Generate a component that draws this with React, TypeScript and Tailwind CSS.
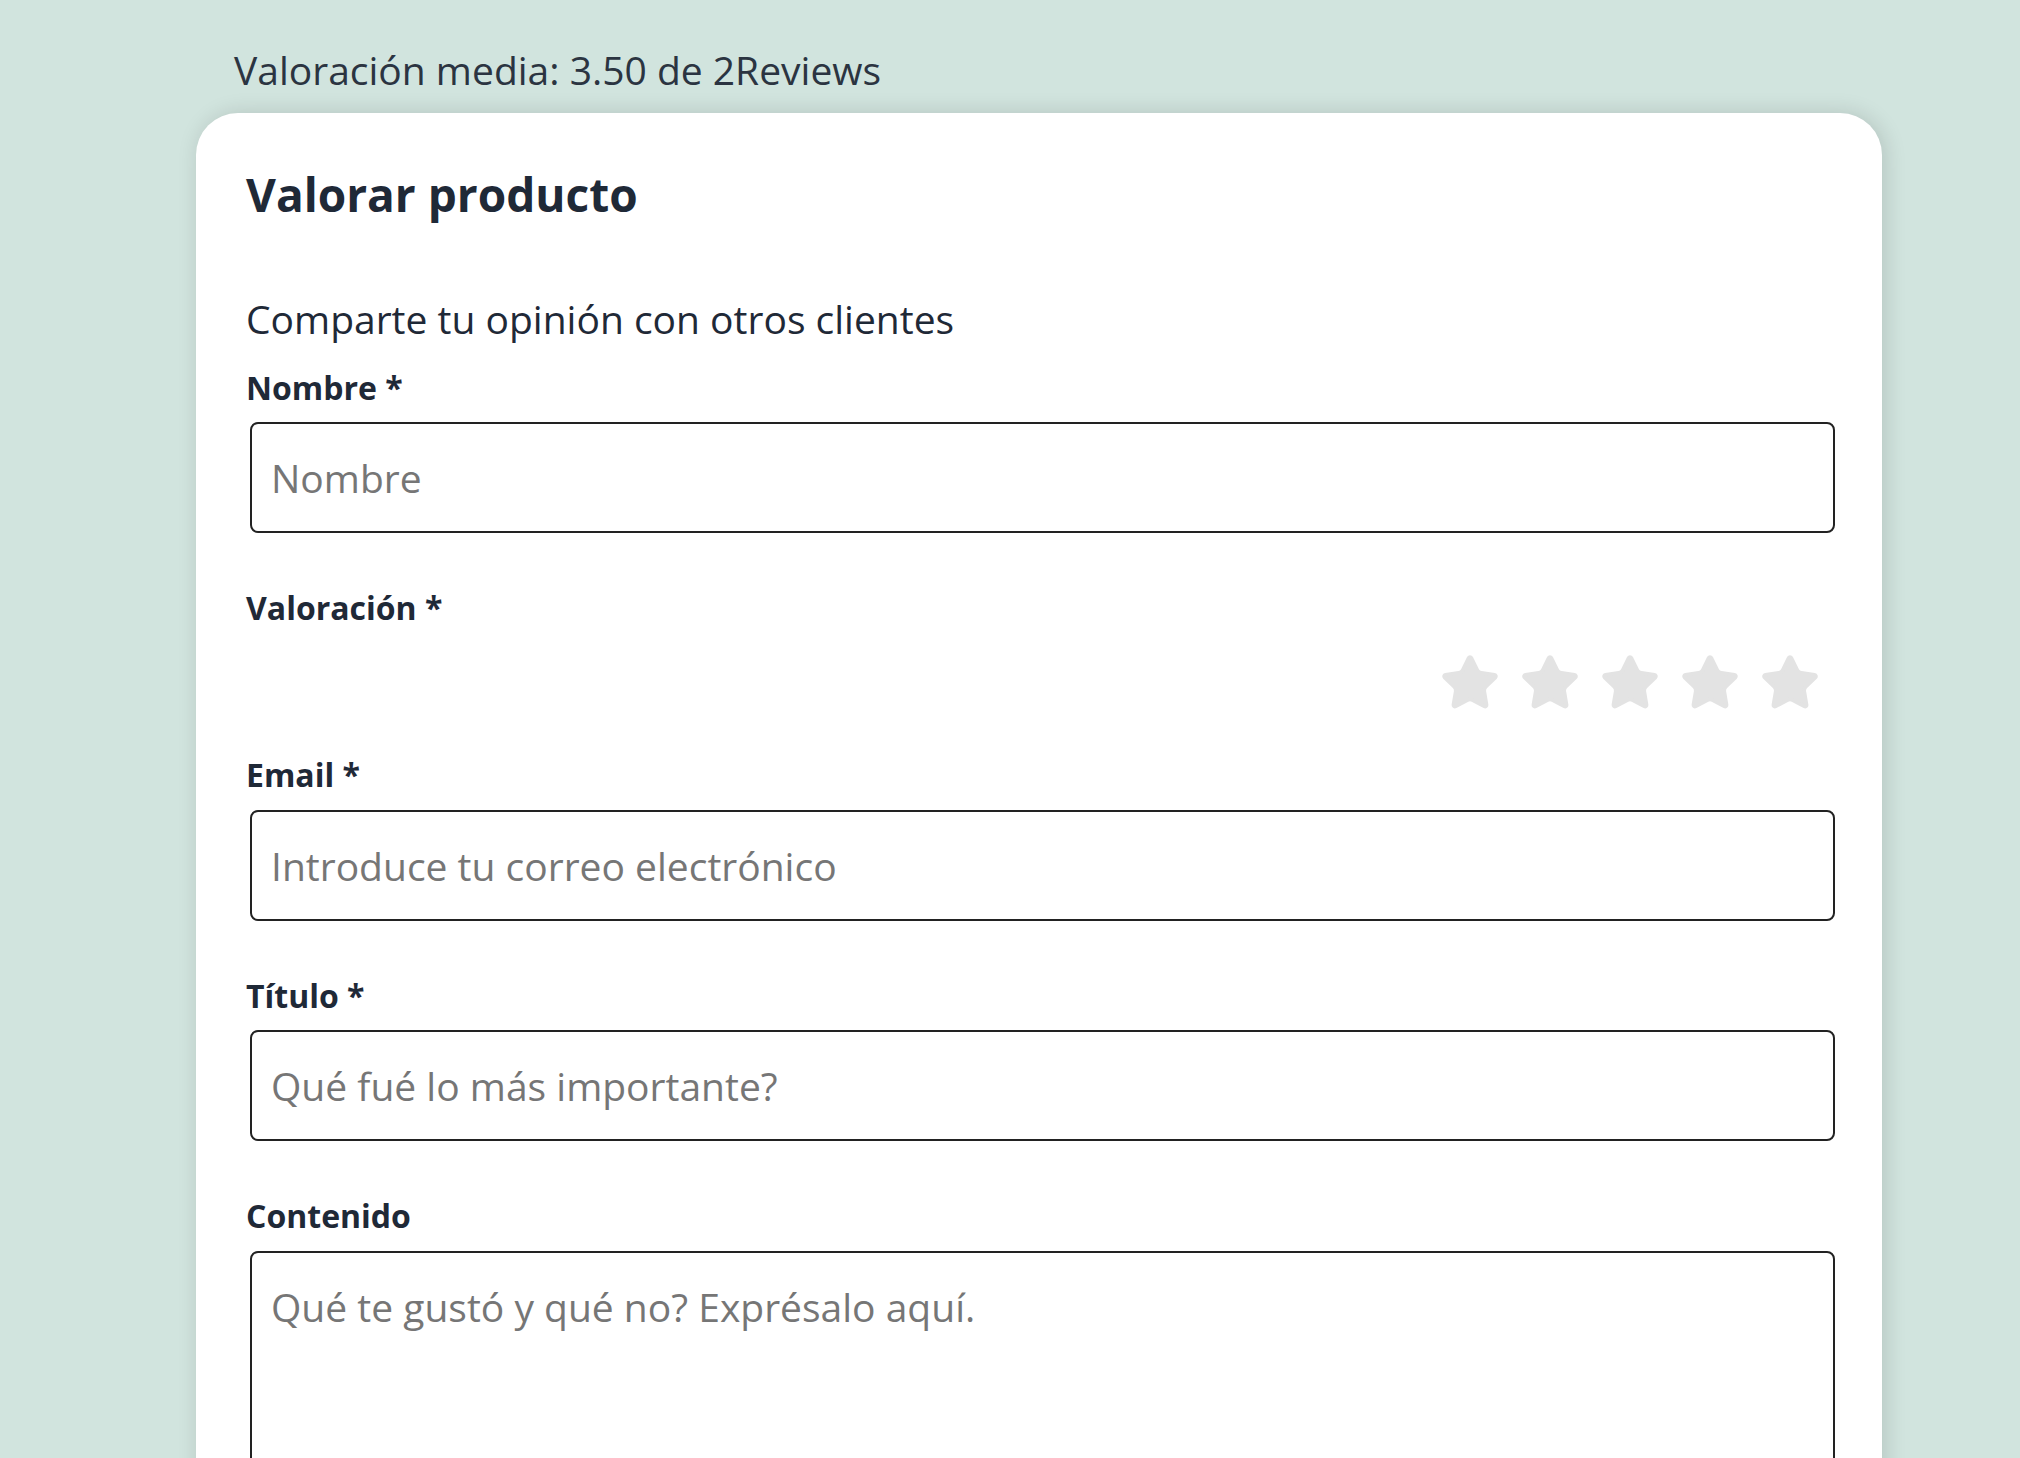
import { Star } from "lucide-react";

const font = { fontFamily: '"Open Sans", "Noto Sans", sans-serif' };

type FieldProps = {
  label: string;
  placeholder: string;
  type?: string;
};

const Field = ({ label, placeholder, type = "text" }: FieldProps) => {
  return (
    <div className="mt-[55px] first:mt-0">
      <label className="block text-[32px] font-bold leading-[40px] text-[#1f2937]">
        {label}
      </label>
      <input
        type={type}
        placeholder={placeholder}
        className="mt-[14px] ml-[4px] block h-[111px] w-[1585px] rounded-lg border-2 border-[#222] bg-white px-[19px] text-[39px] text-[#1f2937] outline-none placeholder:text-[#767676]"
      />
    </div>
  );
};

export default function App() {
  return (
    <div
      className="min-h-[1458px] w-full overflow-hidden bg-[#d1e4de] pt-[46px]"
      style={font}
    >
      <p className="ml-[234px] text-[39px] leading-[48px] text-[#2b3441]">
        Valoración media: 3.50 de 2Reviews
      </p>
      <div className="mt-[19px] ml-[196px] w-[1686px] rounded-t-[42px] bg-white pb-[60px] pl-[50px] pr-[46px] pt-[51px] shadow-[3px_0_22px_rgba(0,0,0,0.14)]">
        <h2 className="text-[46px] font-bold leading-[60px] text-[#1f2937]">
          Valorar producto
        </h2>
        <p className="mt-[71px] text-[39px] leading-[48px] text-[#1f2937]">
          Comparte tu opinión con otros clientes
        </p>
        <div className="mt-[25px]">
          <Field label="Nombre *" placeholder="Nombre" />
        </div>

        <div className="mt-[55px]">
          <label className="block text-[32px] font-bold leading-[40px] text-[#1f2937]">
            Valoración *
          </label>
          <div className="mt-[24px] flex h-[62px] items-center justify-end gap-[18px] pr-[15px]">
            {[1, 2, 3, 4, 5].map((n) => (
              <Star
                key={n}
                size={62}
                fill="#e3e3e3"
                stroke="#e3e3e3"
                strokeWidth={1.5}
              />
            ))}
          </div>
        </div>

        <div className="mt-[41px]">
          <label className="block text-[32px] font-bold leading-[40px] text-[#1f2937]">
            Email *
          </label>
          <input
            type="email"
            placeholder="Introduce tu correo electrónico"
            className="mt-[15px] ml-[4px] block h-[111px] w-[1585px] rounded-lg border-2 border-[#222] bg-white px-[19px] text-[39px] text-[#1f2937] outline-none placeholder:text-[#767676]"
          />
        </div>

        <Field label="Título *" placeholder="Qué fué lo más importante?" />

        <div className="mt-[55px]">
          <label className="block text-[32px] font-bold leading-[40px] text-[#1f2937]">
            Contenido
          </label>
          <textarea
            placeholder="Qué te gustó y qué no? Exprésalo aquí."
            className="mt-[15px] ml-[4px] block h-[260px] w-[1585px] resize-none rounded-lg border-2 border-[#222] bg-white px-[19px] pt-[30px] text-[39px] leading-[48px] text-[#1f2937] outline-none placeholder:text-[#767676]"
          />
        </div>
      </div>
    </div>
  );
}
